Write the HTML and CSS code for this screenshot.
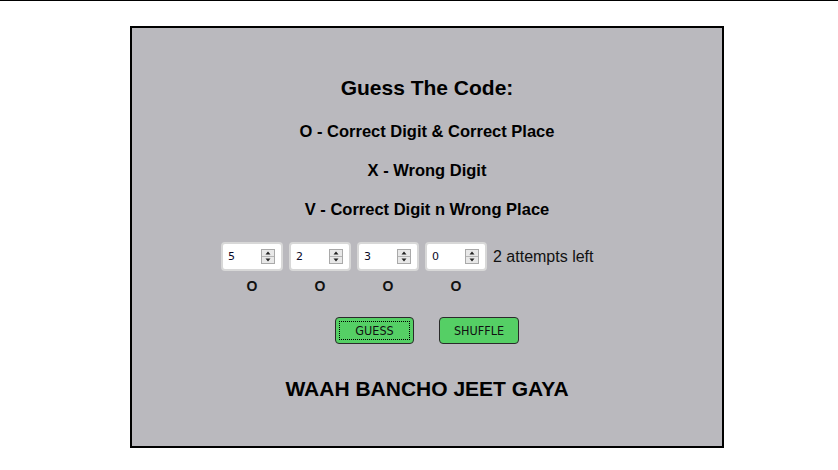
FILE: index.html
```html
<!DOCTYPE html>
<html>
<head>
<meta charset="utf-8">
<title>Guess The Code</title>
<link rel="stylesheet" href="styles.css">
</head>
<body>
<div class="game">
  <h1 class="title">Guess The Code:</h1>
  <p class="rule rule-first">O - Correct Digit &amp; Correct Place</p>
  <p class="rule">X - Wrong Digit</p>
  <p class="rule">V - Correct Digit n Wrong Place</p>

  <div class="inputs">
    <div class="numbox"><span class="val">5</span><svg class="spin" width="14" height="15" viewBox="0 0 14 15"><rect x="0.5" y="0.5" width="13" height="14" fill="#e8e8e8" stroke="#a9a9a9"/><line x1="1" y1="7.5" x2="13" y2="7.5" stroke="#b4b4b4"/><path d="M4.5 5.5h5l-2.5-3z" fill="#222"/><path d="M4.5 9.5h5l-2.5 3z" fill="#222"/></svg></div>
    <div class="numbox"><span class="val">2</span><svg class="spin" width="14" height="15" viewBox="0 0 14 15"><rect x="0.5" y="0.5" width="13" height="14" fill="#e8e8e8" stroke="#a9a9a9"/><line x1="1" y1="7.5" x2="13" y2="7.5" stroke="#b4b4b4"/><path d="M4.5 5.5h5l-2.5-3z" fill="#222"/><path d="M4.5 9.5h5l-2.5 3z" fill="#222"/></svg></div>
    <div class="numbox"><span class="val">3</span><svg class="spin" width="14" height="15" viewBox="0 0 14 15"><rect x="0.5" y="0.5" width="13" height="14" fill="#e8e8e8" stroke="#a9a9a9"/><line x1="1" y1="7.5" x2="13" y2="7.5" stroke="#b4b4b4"/><path d="M4.5 5.5h5l-2.5-3z" fill="#222"/><path d="M4.5 9.5h5l-2.5 3z" fill="#222"/></svg></div>
    <div class="numbox"><span class="val">0</span><svg class="spin" width="14" height="15" viewBox="0 0 14 15"><rect x="0.5" y="0.5" width="13" height="14" fill="#e8e8e8" stroke="#a9a9a9"/><line x1="1" y1="7.5" x2="13" y2="7.5" stroke="#b4b4b4"/><path d="M4.5 5.5h5l-2.5-3z" fill="#222"/><path d="M4.5 9.5h5l-2.5 3z" fill="#222"/></svg></div>
    <span class="attempts">2 attempts left</span>
  </div>

  <div class="results">
    <span>O</span><span>O</span><span>O</span><span>O</span>
  </div>

  <div class="buttons">
    <button class="btn btn-focus">GUESS</button>
    <button class="btn">SHUFFLE</button>
  </div>

  <p class="win">WAAH BANCHO JEET GAYA</p>
</div>
</body>
</html>
```

FILE: styles.css
```css
html, body {
  margin: 0;
  padding: 0;
  background: #ffffff;
}

body {
  border-top: 1px solid #000000;
  font-family: "Liberation Sans", Arial, sans-serif;
  color: #000000;
}

.game {
  box-sizing: border-box;
  width: 594px;
  height: 422px;
  margin: 25px 0 0 130px;
  border: 2px solid #000000;
  background: #bab9be;
  padding-top: 48px;
  display: flex;
  flex-direction: column;
  align-items: center;
}

.title {
  margin: 0;
  font-size: 21px;
  line-height: 24px;
  font-weight: bold;
}

.rule {
  margin: 19px 0 0;
  font-size: 16.5px;
  line-height: 20px;
  font-weight: bold;
}

.rule-first {
  margin-top: 21px;
}

.inputs {
  align-self: flex-start;
  margin: 23px 0 0 89px;
  display: flex;
  align-items: center;
  gap: 6px;
}

.numbox {
  box-sizing: border-box;
  width: 62px;
  height: 29px;
  border: 2px solid #d8d8d8;
  border-radius: 4px;
  background: #ffffff;
  display: flex;
  align-items: center;
  justify-content: space-between;
  padding: 0 6px 0 5px;
}

.val {
  font-family: "DejaVu Sans", sans-serif;
  font-size: 11px;
  color: #0a0a28;
}

.spin {
  display: block;
}

.attempts {
  font-size: 16px;
  color: #111111;
}

.results {
  align-self: flex-start;
  margin: 7px 0 0 89px;
  display: grid;
  grid-template-columns: repeat(4, 62px);
  column-gap: 6px;
  font-size: 14px;
  line-height: 16px;
  font-weight: bold;
  text-align: center;
  color: #111111;
}

.buttons {
  margin-top: 23px;
  display: flex;
  gap: 25px;
}

.btn {
  box-sizing: border-box;
  width: 79px;
  height: 27px;
  background: #55cf65;
  border: 1px solid #2a2a2a;
  border-radius: 4px;
  font-family: "DejaVu Sans Condensed", "DejaVu Sans", sans-serif;
  font-stretch: condensed;
  font-size: 12.5px;
  color: #111111;
  padding: 0;
}

.btn + .btn {
  width: 80px;
}

.btn-focus {
  outline: 1px dotted #000000;
  outline-offset: -5px;
}

.win {
  margin: 33px 0 0;
  font-size: 21px;
  line-height: 24px;
  font-weight: bold;
}
```
